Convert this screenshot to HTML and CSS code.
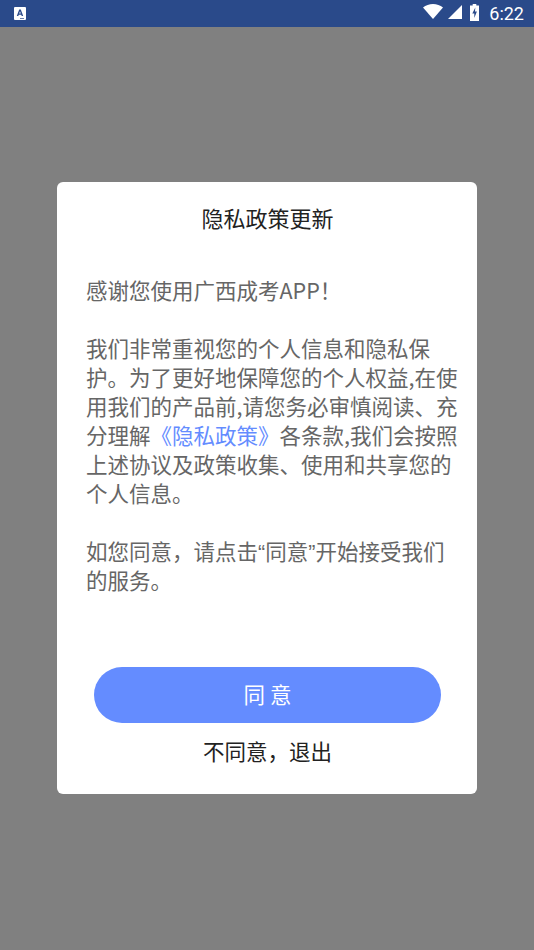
FILE: index.html
```html
<!DOCTYPE html>
<html lang="zh">
<head>
<meta charset="utf-8">
<title>隐私政策更新</title>
<link rel="stylesheet" href="styles.css">
</head>
<body>
<div class="status">
  <svg class="notif" width="12" height="13" viewBox="0 0 12 13"><rect width="12" height="13" rx="1" fill="#fff"/><path d="M2.800 9 5.200 2.600h1.600L9.200 9H7.700L7.200 7.800H4.800L4.300 9z M5.200 6.600h1.600L6 4.200z" fill="#2a4a8a" fill-rule="evenodd"/><path d="M6 11h4v.7H6z" fill="#2a4a8a"/></svg>
  <div class="sys">
    <svg class="wifi" width="20" height="15" viewBox="0 0 20 15"><path d="M0 3.600C2.800 1.400 6.200 0 10 0s7.200 1.400 10 3.600L10 15z" fill="#fff"/></svg>
    <svg class="signal" width="14" height="14" viewBox="0 0 14 14"><path d="M14 0v14H0z" fill="#fff"/></svg>
    <svg class="battery" width="9" height="17" viewBox="0 0 9 17"><path d="M2.700 0h3.600v1.500H9V17H0V1.500h2.700z" fill="#fff"/><path d="M5.300 3.500 2.300 9.500h2v4.500l2.600-6.500H5z" fill="#2a4a8a"/></svg>
    <span class="time">6:22</span>
  </div>
</div>
<main class="overlay">
  <section class="dialog">
    <h1 class="title">隐私政策更新</h1>
    <p class="body">感谢您使用广西成考APP！<br><br>我们非常重视您的个人信息和隐私保<br>护。为了更好地保障您的个人权益,在使<br>用我们的产品前,请您务必审慎阅读、充<br>分理解<span class="link">《隐私政策》</span>各条款,我们会按照<br>上述协议及政策收集、使用和共享您的<br>个人信息。<br><br>如您同意，请点击<span class="quote">“</span>同意<span class="quote">”</span>开始接受我们<br>的服务。</p>
    <button class="agree">同 意</button>
    <button class="refuse">不同意，退出</button>
  </section>
</main>
</body>
</html>
```

FILE: styles.css
```css
* { box-sizing: border-box; }
html, body { margin: 0; height: 100%; }
body {
  width: 534px;
  height: 950px;
  overflow: hidden;
  background: #808080;
  font-family: "Noto Sans CJK SC", "Noto Sans", sans-serif;
}
.status {
  height: 27px;
  background: #2a4a8a;
  display: flex;
  align-items: flex-start;
  justify-content: space-between;
  padding: 0 10px 0 14px;
}
.notif { display: block; margin-top: 7px; }
.sys { display: flex; align-items: flex-start; }
.sys svg { display: block; }
.wifi { margin-top: 4px; }
.signal { margin: 5px 0 0 5px; }
.battery { margin: 4px 0 0 8px; }
.time {
  margin-left: 10px;
  color: #fff;
  font: 18px/27px Roboto, sans-serif;
}
.overlay { padding-top: 155px; display: flex; justify-content: center; }
.dialog {
  width: 420px;
  height: 612px;
  background: #fff;
  border-radius: 6px;
  display: flex;
  flex-direction: column;
  align-items: center;
}
.title {
  margin: 19px 0 0 1px;
  font-size: 22px;
  line-height: 32px;
  font-weight: 400;
  color: #222;
}
.body {
  margin: 42px 0 0;
  width: 420px;
  padding-left: 29px;
  font-size: 21.500px;
  line-height: 29px;
  color: #666;
  white-space: nowrap;
}
.quote { font-family: "Liberation Sans", sans-serif; line-height: 0; }
.link { color: #648cff; }
.agree {
  margin-top: 72.500px;
  width: 347px;
  height: 56px;
  padding: 0 0 3px 1px;
  border: 0;
  border-radius: 28px;
  background: #648cff;
  color: #fff;
  font: 400 21.500px/53px "Noto Sans CJK SC", sans-serif;
}
.refuse {
  margin: 13px 0 0 1px;
  padding: 0;
  border: 0;
  background: none;
  color: #222;
  font: 400 21.500px/30px "Noto Sans CJK SC", sans-serif;
}
```
